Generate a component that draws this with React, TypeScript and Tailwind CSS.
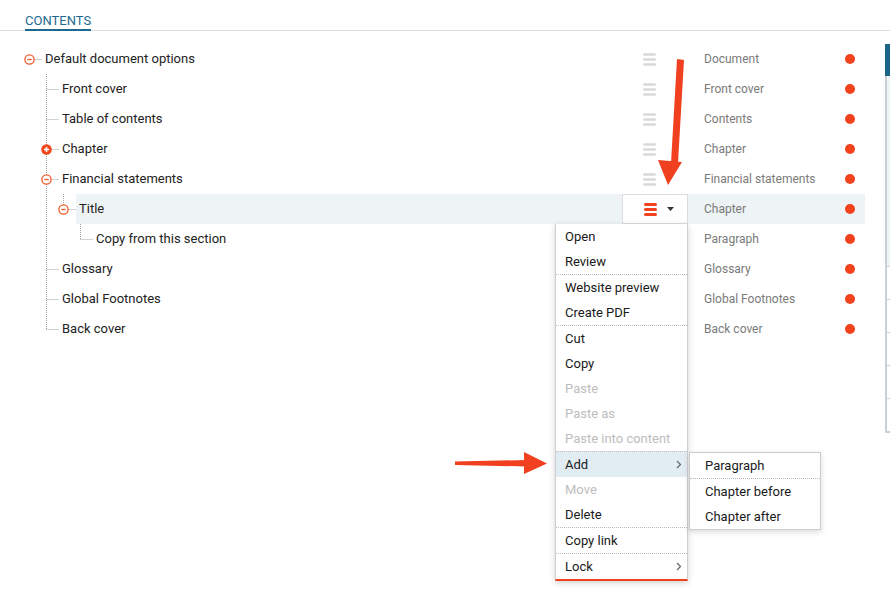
import React from "react";

type Row = {
  label: string;
  level: number;
  type: string;
  icon?: "minus" | "plus";
  cont?: boolean; // own rail keeps going below this row
  rails?: number[]; // ancestor rails passing through
  selected?: boolean;
};

const rows: Row[] = [
  { label: "Default document options", level: 0, type: "Document", icon: "minus" },
  { label: "Front cover", level: 1, type: "Front cover", cont: true },
  { label: "Table of contents", level: 1, type: "Contents", cont: true },
  { label: "Chapter", level: 1, type: "Chapter", icon: "plus", cont: true },
  { label: "Financial statements", level: 1, type: "Financial statements", icon: "minus", cont: true },
  { label: "Title", level: 2, type: "Chapter", icon: "minus", rails: [1], selected: true },
  { label: "Copy from this section", level: 3, type: "Paragraph", rails: [1] },
  { label: "Glossary", level: 1, type: "Glossary", cont: true },
  { label: "Global Footnotes", level: 1, type: "Global Footnotes", cont: true },
  { label: "Back cover", level: 1, type: "Back cover" },
];

const DOT = "#a3a3a3";
const cx = (level: number) => 9.5 + 17 * level;

function Gutter({ row }: { row: Row }) {
  const w = 22 + 17 * row.level;
  const x = cx(row.level);
  return (
    <svg width={w} height={30} className="shrink-0">
      {(row.rails ?? []).map((r) => (
        <line key={r} x1={cx(r)} y1={0} x2={cx(r)} y2={30} stroke={DOT} strokeDasharray="1 1" />
      ))}
      {row.level > 0 && (
        <line x1={x} y1={0} x2={x} y2={row.cont ? 30 : 15} stroke={DOT} strokeDasharray="1 1" />
      )}
      <line x1={row.icon ? x + 5 : x} y1={15.5} x2={w} y2={15.5} stroke={DOT} strokeDasharray="1 1" />
      {row.icon === "minus" && (
        <g>
          <circle cx={x} cy={15.5} r={4.6} fill="white" stroke="#f05a2a" strokeWidth={1.3} />
          <line x1={x - 2.2} y1={15.5} x2={x + 2.2} y2={15.5} stroke="#f05a2a" strokeWidth={1.3} />
        </g>
      )}
      {row.icon === "plus" && (
        <g>
          <circle cx={x} cy={15.5} r={5.3} fill="#f2461c" />
          <line x1={x - 2.6} y1={15.5} x2={x + 2.6} y2={15.5} stroke="white" strokeWidth={1.6} />
          <line x1={x} y1={12.9} x2={x} y2={18.1} stroke="white" strokeWidth={1.6} />
        </g>
      )}
    </svg>
  );
}

function Handle({ color, thick }: { color: string; thick: number }) {
  return (
    <svg width={13} height={13} className="shrink-0">
      {[0, 5, 10].map((y) => (
        <rect key={y} x={0} y={y + (3 - thick) / 2} width={13} height={thick} rx={thick / 2} fill={color} />
      ))}
    </svg>
  );
}

function Chevron() {
  return (
    <svg width={6} height={9} viewBox="0 0 6 9">
      <path d="M1 1l3.5 3.5L1 8" fill="none" stroke="#666" strokeWidth={1.2} />
    </svg>
  );
}

type MenuItem = { label: string; disabled?: boolean; sep?: boolean; sub?: boolean; active?: boolean };

const menu: MenuItem[] = [
  { label: "Open" },
  { label: "Review" },
  { label: "Website preview", sep: true },
  { label: "Create PDF" },
  { label: "Cut", sep: true },
  { label: "Copy" },
  { label: "Paste", disabled: true },
  { label: "Paste as", disabled: true },
  { label: "Paste into content", disabled: true },
  { label: "Add", sep: true, sub: true, active: true },
  { label: "Move", disabled: true },
  { label: "Delete" },
  { label: "Copy link", sep: true },
  { label: "Lock", sep: true, sub: true },
];

export default function App() {
  return (
    <div className="relative w-[890px] h-[604px] overflow-hidden bg-white text-[13px] font-['Roboto','Liberation_Sans',sans-serif]">
      <div className="h-[31px] border-b border-[#dedede] pl-[25px] flex items-end">
        <span className="-mb-px pb-[2px] leading-none border-b-2 border-[#1d6a8e] text-[#1d6a8e]">CONTENTS</span>
      </div>

      <div className="flex">
        <div className="w-[865px] shrink-0 pt-[13px] pl-[20px]">
          {rows.map((row) => (
            <div key={row.label} className="flex h-[30px]">
              <Gutter row={row} />
              <div className={`flex flex-1 items-center pl-[3px] ${row.selected ? "bg-[#eef3f6]" : ""}`}>
                <span className="flex-1 text-[#222]">{row.label}</span>
                {row.selected ? (
                  <div className="w-[66px] h-full flex items-center pl-[21px] bg-white border border-[#dcdcdc]">
                    <Handle color="#f2411d" thick={3} />
                    <svg width={8} height={5} className="ml-[10px]">
                      <path d="M0 0h7l-3.5 4z" fill="#333" />
                    </svg>
                  </div>
                ) : (
                  <div className="w-[66px] h-full flex items-center pl-[21px]">
                    <Handle color="#d9d9d9" thick={2.6} />
                  </div>
                )}
                <span className="w-[157px] pl-[16px] text-[12px] text-[#7a7a7a]">{row.type}</span>
                <div className="w-[20px]">
                  <span className="block w-[10px] h-[10px] rounded-full bg-[#f2411d]" />
                </div>
              </div>
            </div>
          ))}
        </div>

        <div className="ml-[20px] mt-[13px] w-[300px] shrink-0">
          <div className="h-[32px] bg-[#1b6387]" />
          <div className="border-l-2 border-[#c9d1d7]">
            <div className="h-[190px] bg-[#eff4f7]" />
            {[0, 1, 2, 3, 4].map((i) => (
              <div key={i} className="h-[33px] border-t border-[#c9d1d7]" />
            ))}
          </div>
          <div className="h-[2px] bg-[#c9d1d7]" />
        </div>
      </div>

      {/* context menu */}
      <div className="absolute left-[555px] top-[224px] w-[133px] bg-white border-x border-[#cfcfcf] border-b-2 border-b-[#f0401c] shadow-[0_2px_6px_rgba(0,0,0,0.18)]">
        {menu.map((m) => (
          <div
            key={m.label}
            className={`flex items-center justify-between pl-[9px] pr-[5px] ${
              m.sep ? "h-[26px] border-t border-dotted border-[#bdbdbd]" : "h-[25px]"
            } ${m.active ? "bg-[#e1edf2]" : ""} ${m.disabled ? "text-[#bdbdbd]" : "text-[#1a1a1a]"}`}
          >
            <span>{m.label}</span>
            {m.sub && <Chevron />}
          </div>
        ))}
      </div>

      {/* Add submenu */}
      <div className="absolute left-[689px] top-[452px] w-[132px] bg-white border border-[#cccccc] shadow-[0_2px_6px_rgba(0,0,0,0.15)] text-[#1a1a1a]">
        <div className="h-[25px] flex items-center pl-[15px]">Paragraph</div>
        <div className="h-[26px] flex items-center pl-[15px] border-t border-dotted border-[#bdbdbd]">Chapter before</div>
        <div className="h-[25px] flex items-center pl-[15px]">Chapter after</div>
      </div>

      {/* callout arrows */}
      <svg className="absolute inset-0 pointer-events-none" width={890} height={604}>
        <polygon points="677,59 684,60 678,163 671,163" fill="#f0401f" />
        <polygon points="658,160 682,162 668,185" fill="#f0401f" />
        <polygon points="455,461.5 527,460 527,466.5 455,465" fill="#f0401f" />
        <polygon points="524,452 547,463.5 524,474" fill="#f0401f" />
      </svg>
    </div>
  );
}
